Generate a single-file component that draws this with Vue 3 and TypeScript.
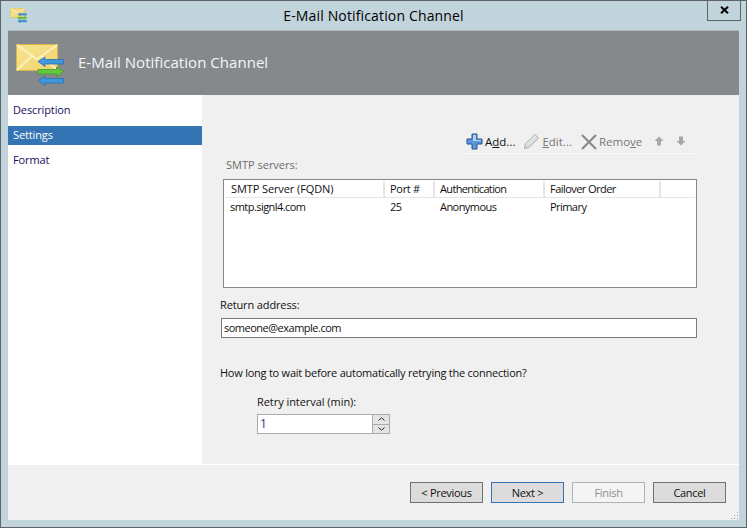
<script setup lang="ts">
const navItems = ["Description", "Settings", "Format"];
const activeNav = "Settings";

const columns = [
  { label: "SMTP Server (FQDN)", width: 160, tracking: -0.1 },
  { label: "Port #", width: 50, tracking: -0.3 },
  { label: "Authentication", width: 110, tracking: -0.65 },
  { label: "Failover Order", width: 116, tracking: -0.55 },
];
const rows = [["smtp.signl4.com", "25", "Anonymous", "Primary"]];

const buttons = [
  { label: "< Previous", kind: "" },
  { label: "Next >", kind: "is-default" },
  { label: "Finish", kind: "is-disabled" },
  { label: "Cancel", kind: "" },
];
</script>

<template>
  <div class="window">
    <header class="titlebar">
      <div class="titlebar__icon">
        <svg width="17" height="15" viewBox="0 0 48 42">
          <use href="#channel-icon" />
        </svg>
      </div>
      <div class="titlebar__title">E-Mail Notification Channel</div>
      <div class="titlebar__actions">
        <button class="close-btn" type="button">
          <svg width="9" height="8" viewBox="0 0 9 8">
            <path d="M1 0.8 L8 7.2 M8 0.8 L1 7.2" stroke="#000" stroke-width="2" fill="none" />
          </svg>
        </button>
      </div>
    </header>

    <div class="client">
      <div class="banner">
        <svg class="banner__icon" width="48" height="42" viewBox="0 0 48 42">
          <defs>
            <linearGradient id="env" x1="0" y1="0" x2="1" y2="1">
              <stop offset="0" stop-color="#f8e592" />
              <stop offset="1" stop-color="#efd26e" />
            </linearGradient>
            <symbol id="channel-icon" viewBox="0 0 48 42">
              <rect x="0.5" y="0.5" width="41" height="26" fill="url(#env)" stroke="#d9b44e" />
              <path d="M1 1 L21 15 L41 1 M1 26 L16 12 M41 26 L26 12" stroke="#fcf2bd" stroke-width="2" fill="none" />
              <path d="M22 17.5 L29 13 V15.5 H47.5 V20 H29 V22.5 Z" fill="#3f97dc" stroke="#2a6fb0" stroke-width="0.8" />
              <path d="M47.5 27.5 L40.5 23 V25.5 H22 V30 H40.5 V32.5 Z" fill="#62c93c" stroke="#3f9a25" stroke-width="0.8" />
              <path d="M22 36.5 L29 32 V34.5 H47.5 V39 H29 V41.5 Z" fill="#3f97dc" stroke="#2a6fb0" stroke-width="0.8" />
            </symbol>
          </defs>
          <use href="#channel-icon" />
        </svg>
        <span class="banner__title">E-Mail Notification Channel</span>
      </div>

      <div class="body">
        <nav class="nav">
          <div
            v-for="item in navItems"
            :key="item"
            class="nav__item"
            :class="{ 'is-active': item === activeNav }"
          >
            {{ item }}
          </div>
        </nav>

        <main class="panel">
          <div class="toolbar">
            <span class="tool">
              <svg width="17" height="17" viewBox="0 0 17 17">
                <path d="M6 1 H11 V6 H16 V11 H11 V16 H6 V11 H1 V6 H6 Z" fill="#5b97dd" stroke="#24528f" />
                <path d="M7 2 H10 V7 H15 V8 H7 Z" fill="#b3d2f3" />
              </svg>
              <span class="tool__label">A<u>d</u>d...</span>
            </span>
            <span class="tool is-muted">
              <svg width="17" height="17" viewBox="0 0 17 17">
                <path d="M1.5 15.5 L2.5 11 L12 1.5 L15.5 5 L6 14.5 Z" fill="#dcdcdc" stroke="#a9a9a9" />
                <path d="M3.5 11.5 L12.5 3" stroke="#f6f6f6" fill="none" />
              </svg>
              <span class="tool__label"><u>E</u>dit...</span>
            </span>
            <span class="tool is-muted">
              <svg width="16" height="16" viewBox="0 0 16 16">
                <path d="M1 1 L15 15 M15 1 L1 15" stroke="#8a8a8a" stroke-width="2.2" fill="none" />
              </svg>
              <span class="tool__label">Remo<u>v</u>e</span>
            </span>
            <svg class="tool__arrow" width="10" height="10" viewBox="0 0 10 10">
              <path d="M5 0.5 L9.5 5 H7 V9.5 H3 V5 H0.5 Z" fill="#a8a8a8" />
            </svg>
            <svg class="tool__arrow" width="10" height="10" viewBox="0 0 10 10">
              <path d="M5 9.5 L9.5 5 H7 V0.5 H3 V5 H0.5 Z" fill="#a8a8a8" />
            </svg>
          </div>

          <div class="servers-label">SMTP servers:</div>
          <div class="list">
            <div class="list__head">
              <div
                v-for="col in columns"
                :key="col.label"
                class="list__col"
                :style="{ width: col.width + 'px', letterSpacing: col.tracking + 'px' }"
              >
                {{ col.label }}
              </div>
            </div>
            <div v-for="row in rows" :key="row[0]" class="list__row">
              <div
                v-for="(cell, i) in row"
                :key="i"
                class="list__cell"
                :style="{ width: columns[i].width + 'px' }"
              >
                {{ cell }}
              </div>
            </div>
          </div>

          <label class="field-label">Return address:</label>
          <div class="textbox">someone@example.com</div>

          <p class="question">How long to wait before automatically retrying the connection?</p>

          <div class="retry">
            <label class="retry__label">Retry interval (min):</label>
            <div class="spin">
              <span class="spin__value">1</span>
              <div class="spin__buttons">
                <span class="spin__btn">
                  <svg width="7" height="4" viewBox="0 0 7 4"><path d="M0.5 3.5 L3.5 0.8 L6.5 3.5" stroke="#222" fill="none" /></svg>
                </span>
                <span class="spin__btn">
                  <svg width="7" height="4" viewBox="0 0 7 4"><path d="M0.5 0.5 L3.5 3.2 L6.5 0.5" stroke="#222" fill="none" /></svg>
                </span>
              </div>
            </div>
          </div>
        </main>
      </div>

      <footer class="footer">
        <button
          v-for="btn in buttons"
          :key="btn.label"
          class="btn"
          :class="btn.kind"
          type="button"
        >
          {{ btn.label }}
        </button>
        <svg class="grip" width="9" height="9" viewBox="0 0 9 9">
          <path d="M7 1h1v1H7zM4 4h1v1H4zM7 4h1v1H7zM1 7h1v1H1zM4 7h1v1H4zM7 7h1v1H7z" fill="#a5a5a5" />
        </svg>
      </footer>
    </div>
  </div>
</template>

<style scoped>
.window {
  box-sizing: border-box;
  width: 747px;
  height: 528px;
  display: flex;
  flex-direction: column;
  background: #c1d4dc;
  border: 1px solid #5f6468;
  font-family: "Open Sans", "Noto Sans", sans-serif;
  font-size: 11px;
  color: #111;
  overflow: hidden;
}

.titlebar {
  height: 29px;
  flex: none;
  display: grid;
  grid-template-columns: 1fr auto 1fr;
}

.titlebar__icon {
  padding: 7px 0 0 9px;
}

.titlebar__title {
  padding-top: 5px;
  font-size: 14px;
  letter-spacing: 0.15px;
  color: #000;
}

.titlebar__actions {
  display: flex;
  justify-content: flex-end;
  align-items: flex-start;
  padding-right: 5px;
}

.close-btn {
  width: 34px;
  height: 21px;
  margin-top: -1px;
  display: flex;
  align-items: center;
  justify-content: center;
  padding: 0;
  background: transparent;
  border: 1px solid #5f6468;
  border-top: none;
}

.client {
  flex: 1;
  min-height: 0;
  margin: 0 7px 7px;
  display: flex;
  flex-direction: column;
  background: #f0f0f0;
  border-top: 1px solid #a9b6bc;
}

.banner {
  height: 64px;
  flex: none;
  display: flex;
  align-items: center;
  gap: 14px;
  padding-left: 8px;
  background: #85898c;
}

.banner__icon {
  margin-top: 3px;
}

.banner__title {
  color: #f4f6f6;
  font-size: 15px;
  letter-spacing: 0.04px;
  margin-top: -2px;
}

.body {
  flex: 1;
  min-height: 0;
  display: flex;
  border-bottom: 1px solid #fff;
}

.nav {
  width: 194px;
  flex: none;
  background: #fff;
}

.nav__item {
  height: 19px;
  line-height: 17px;
  margin-top: 6px;
  padding-left: 5px;
  letter-spacing: -0.12px;
  color: #14105c;
}

.nav__item.is-active {
  background: #3574b4;
  color: #fff;
}

.panel {
  flex: 1;
  min-width: 0;
  padding: 35px 42px 0 18px;
}

.toolbar {
  box-sizing: border-box;
  height: 24px;
  margin-left: 244px;
  display: flex;
  align-items: flex-start;
  padding: 3px 0 0 2px;
  border-bottom: 1px solid #fafafa;
  font-size: 11.5px;
  color: #777;
}

.tool {
  display: flex;
  flex: none;
  align-items: center;
  gap: 2px;
  margin-right: 8px;
  line-height: 17px;
}

.tool:first-child {
  color: #111;
}

.tool:nth-child(2) {
  margin-right: 9px;
}

.tool__arrow {
  flex: none;
  margin: 3px 8px 0 4px;
}

.servers-label {
  margin: 3px 0 0 6px;
  height: 22px;
  line-height: 15px;
  color: #6b6b6b;
}

.list {
  box-sizing: border-box;
  height: 109px;
  margin-left: 3px;
  background: #fff;
  border: 1px solid #828790;
  padding: 1px;
}

.list__head {
  height: 16px;
  display: flex;
  border-bottom: 1px solid #e5e5e5;
}

.list__col {
  box-sizing: border-box;
  padding-left: 5px;
  line-height: 15px;
  border-right: 2px solid #e5e5e5;
}

.list__col:first-child {
  padding-left: 6px;
}

.list__row {
  display: flex;
  height: 18px;
  line-height: 18px;
  letter-spacing: -0.55px;
}

.list__cell {
  box-sizing: border-box;
  padding-left: 5px;
}

.field-label {
  display: block;
  margin-top: 9px;
  line-height: 15px;
  letter-spacing: -0.13px;
}

.textbox {
  box-sizing: border-box;
  height: 20px;
  margin: 6px 0 0 1px;
  padding-left: 2px;
  line-height: 18px;
  letter-spacing: -0.5px;
  background: #fff;
  border: 1px solid #7a7a7a;
}

.question {
  margin: 27px 0 0;
  line-height: 15px;
  letter-spacing: -0.24px;
}

.retry {
  margin: 14px 0 0 37px;
}

.retry__label {
  display: block;
  line-height: 15px;
  letter-spacing: -0.05px;
}

.spin {
  box-sizing: border-box;
  width: 133px;
  height: 20px;
  margin-top: 5px;
  display: flex;
  background: #fff;
  border: 1px solid #ababab;
}

.spin__value {
  flex: 1;
  padding-left: 2px;
  line-height: 18px;
  color: #4b1a73;
  font-size: 12px;
}

.spin__buttons {
  width: 16px;
  display: flex;
  flex-direction: column;
  gap: 1px;
  background: #ababab;
  border-left: 1px solid #ababab;
}

.spin__btn {
  flex: 1;
  display: flex;
  align-items: center;
  justify-content: center;
  background: #e4e4e4;
}

.footer {
  box-sizing: border-box;
  height: 55px;
  flex: none;
  position: relative;
  display: flex;
  justify-content: flex-end;
  align-items: flex-start;
  gap: 8px;
  padding: 17px 13px 0 0;
}

.btn {
  box-sizing: border-box;
  width: 73px;
  height: 21px;
  padding: 0;
  font: inherit;
  letter-spacing: -0.3px;
  color: #111;
  background: #dcdcdc;
  border: 1px solid #707070;
}

.btn.is-default {
  border-color: #3574b4;
}

.btn.is-disabled {
  color: #8d8d8d;
  background: #f4f4f4;
  border-color: #adb2b5;
}

/* sits in the window corner */
.grip {
  position: absolute;
  right: 0;
  bottom: 0;
}
</style>

<style>
html,
body {
  margin: 0;
  background: #c1d4dc;
}
</style>
